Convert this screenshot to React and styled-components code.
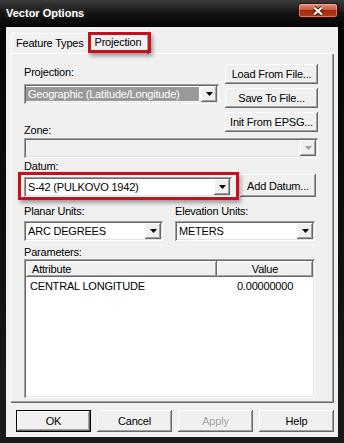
import React from "react";
import styled, { createGlobalStyle } from "styled-components";

/**
 * styles
 */
const GlobalStyle = createGlobalStyle`
  html, body { margin: 0; padding: 0; background: #fff; }
  body {
    font-family: "Liberation Sans", Arial, sans-serif;
    font-size: 11px;
    letter-spacing: -0.2px;
    color: #000;
  }
  * { box-sizing: border-box; }
`;

const raised = `
  box-shadow: inset -1px -1px #696969, inset 1px 1px #ffffff,
    inset -2px -2px #a0a0a0, inset 2px 2px #f0f0f0;
`;

const sunken = `
  box-shadow: inset 1px 1px #a0a0a0, inset -1px -1px #ffffff,
    inset 2px 2px #696969, inset -2px -2px #e3e3e3;
`;

const Window = styled.div`
  width: 344px;
  height: 443px;
  display: flex;
  flex-direction: column;
  background: linear-gradient(
    180deg,
    #3c3c3c 0px,
    #141414 13px,
    #050505 27px,
    #1a1a1a 100%
  );
`;

const TitleBar = styled.div`
  height: 27px;
  display: flex;
  justify-content: space-between;
  align-items: flex-start;
  padding: 0 6px;
`;

const Title = styled.div`
  line-height: 27px;
  font-weight: bold;
  font-size: 11px;
  letter-spacing: 0;
  color: #fff;
  text-shadow: 0 0 4px rgba(255, 255, 255, 0.25);
`;

const CloseButton = styled.div`
  width: 40px;
  height: 15px;
  margin-top: 3px;
  border: 1px solid #3a0c04;
  border-radius: 3px;
  display: flex;
  align-items: center;
  justify-content: center;
  background: linear-gradient(
    180deg,
    #e0957f 0%,
    #c75a3c 45%,
    #a5290f 50%,
    #b33a1e 100%
  );
  box-shadow: inset 0 0 0 1px rgba(255, 200, 180, 0.45);
`;

const Client = styled.div`
  flex: 1;
  margin: 0 6px 6px 6px;
  padding: 4px 4px 5px 4px;
  background: #f0f0f0;
  display: flex;
  flex-direction: column;
`;

const TabStrip = styled.div`
  height: 22px;
  display: flex;
  align-items: flex-end;
  padding-left: 1px;
  position: relative;
  z-index: 1;
`;

const Tab = styled.div`
  position: relative;
  height: ${({ $active }) => ($active ? 23 : 20)}px;
  margin: ${({ $active }) => ($active ? "0 -2px -1px -2px" : "0")};
  padding: ${({ $active }) => ($active ? "1px 8px 0 8px" : "1px 5px 0 5px")};
  line-height: ${({ $active }) => ($active ? 20 : 19)}px;
  background: #f0f0f0;
  border-radius: 2px 2px 0 0;
  white-space: nowrap;
  box-shadow: inset 1px 1px #ffffff, inset -1px 0 #696969, inset -2px 0 #a0a0a0;
  z-index: ${({ $active }) => ($active ? 2 : 1)};
`;

const Highlight = styled.div`
  position: absolute;
  border: 3px solid #c4111b;
  box-shadow: 2px 3px 4px rgba(0, 0, 0, 0.35);
  pointer-events: none;
  top: ${({ $t }) => $t}px;
  left: ${({ $l }) => $l}px;
  right: ${({ $r }) => $r}px;
  bottom: ${({ $b }) => $b}px;
`;

const Panel = styled.div`
  flex: 1;
  padding: 11px 14px 0 14px;
  background: #f0f0f0;
  box-shadow: inset 1px 1px #ffffff, inset -1px -1px #696969,
    inset -2px -2px #a0a0a0;
  display: flex;
  flex-direction: column;
`;

const TopRow = styled.div`
  display: flex;
  align-items: flex-start;
  gap: 6px;
`;

const Column = styled.div`
  width: ${({ $w }) => $w}px;
  display: flex;
  flex-direction: column;
  gap: ${({ $gap }) => $gap || 0}px;
`;

const Label = styled.div`
  height: 14px;
  line-height: 14px;
  white-space: nowrap;
  margin-top: ${({ $mt }) => $mt || 0}px;
`;

const Combo = styled.div`
  width: ${({ $w }) => $w}px;
  height: 20px;
  margin-top: ${({ $mt }) => $mt || 0}px;
  padding: 2px;
  display: flex;
  background: ${({ $disabled }) => ($disabled ? "#f0f0f0" : "#fff")};
  ${sunken}
`;

const ComboText = styled.div`
  flex: 1;
  margin: 1px 2px 1px 0;
  padding-left: 2px;
  line-height: 14px;
  white-space: nowrap;
  overflow: hidden;
  background: ${({ $selected }) => ($selected ? "#999999" : "transparent")};
  color: ${({ $selected }) => ($selected ? "#fff" : "#000")};
`;

const DropButton = styled.div`
  width: 16px;
  display: flex;
  align-items: center;
  justify-content: center;
  background: #f0f0f0;
  ${raised}
`;

const Button = styled.div`
  width: ${({ $w }) => $w}px;
  height: ${({ $h }) => $h || 20}px;
  display: flex;
  align-items: center;
  justify-content: center;
  white-space: nowrap;
  background: #f0f0f0;
  color: ${({ $disabled }) => ($disabled ? "#a0a0a0" : "#000")};
  text-shadow: ${({ $disabled }) => ($disabled ? "1px 1px #fff" : "none")};
  ${raised}
  ${({ $default }) =>
    $default &&
    `box-shadow: inset 0 0 0 1px #000, inset -2px -2px #696969, inset 2px 2px #ffffff,
      inset -3px -3px #a0a0a0;`}
`;

const DatumRow = styled.div`
  display: flex;
  align-items: flex-start;
  gap: 8px;
  margin-top: 1px;
`;

const ComboWrap = styled.div`
  position: relative;
  margin-top: 3px;
`;

const UnitsGrid = styled.div`
  display: grid;
  grid-template-columns: 139px 140px;
  column-gap: 12px;
  margin-top: 7px;
`;

const ListBox = styled.div`
  width: 291px;
  height: 139px;
  padding: 2px;
  background: #fff;
  ${sunken}
`;

const ListRow = styled.div`
  display: grid;
  grid-template-columns: 191px 96px;
  height: 16px;
  line-height: 16px;
  margin-top: ${({ $mt }) => $mt || 0}px;
`;

const HeaderCell = styled.div`
  padding-left: ${({ $center }) => ($center ? 0 : 6)}px;
  text-align: ${({ $center }) => ($center ? "center" : "left")};
  background: #f0f0f0;
  ${raised}
`;

const Cell = styled.div`
  padding-left: ${({ $center }) => ($center ? 0 : 4)}px;
  text-align: ${({ $center }) => ($center ? "center" : "left")};
  white-space: nowrap;
`;

const Footer = styled.div`
  display: flex;
  justify-content: flex-end;
  gap: 6px;
  margin-top: 7px;
`;

/**
 * parts
 */
const Arrow = ({ disabled }) => (
  <svg width="7" height="4" viewBox="0 0 7 4">
    <polygon points="0,0 7,0 3.5,4" fill={disabled ? "#a0a0a0" : "#000"} />
  </svg>
);

const Select = ({ width, value, selected, disabled, mt }) => (
  <Combo $w={width} $mt={mt} $disabled={disabled}>
    <ComboText $selected={selected}>{value}</ComboText>
    <DropButton>
      <Arrow disabled={disabled} />
    </DropButton>
  </Combo>
);

const App = () => (
  <>
    <GlobalStyle />
    <Window>
      <TitleBar>
        <Title>Vector Options</Title>
        <CloseButton>
          <svg width="14" height="10" viewBox="0 0 14 10">
            <path d="M3 1.5 L11 8.5 M11 1.5 L3 8.5" stroke="#4a1206" strokeWidth="4" />
            <path d="M3 1.5 L11 8.5 M11 1.5 L3 8.5" stroke="#fff" strokeWidth="2.2" />
          </svg>
        </CloseButton>
      </TitleBar>

      <Client>
        <TabStrip>
          <Tab>Feature Types</Tab>
          <Tab $active>
            Projection
            <Highlight $t={1} $l={1} $r={-2} $b={1} />
          </Tab>
        </TabStrip>

        <Panel>
          <TopRow>
            <Column $w={195}>
              <Label $mt={1}>Projection:</Label>
              <Select
                width={195}
                mt={5}
                selected
                value="Geographic (Latitude/Longitude)"
              />
              <Label $mt={19}>Zone:</Label>
            </Column>
            <Column $w={93} $gap={4}>
              <Button $w={93}>Load From File...</Button>
              <Button $w={93}>Save To File...</Button>
              <Button $w={93}>Init From EPSG...</Button>
            </Column>
          </TopRow>

          <Select width={294} mt={1} disabled value="" />

          <Label $mt={1}>Datum:</Label>
          <DatumRow>
            <ComboWrap>
              <Select width={208} value="S-42 (PULKOVO 1942)" />
              <Highlight $t={-5} $l={-6} $r={-7} $b={-3} />
            </ComboWrap>
            <Button $w={76} $h={23}>
              Add Datum...
            </Button>
          </DatumRow>

          <UnitsGrid>
            <Label>Planar Units:</Label>
            <Label>Elevation Units:</Label>
            <Select width={139} mt={3} value="ARC DEGREES" />
            <Select width={140} mt={3} value="METERS" />
          </UnitsGrid>

          <Label $mt={4}>Parameters:</Label>
          <ListBox>
            <ListRow>
              <HeaderCell>Attribute</HeaderCell>
              <HeaderCell $center>Value</HeaderCell>
            </ListRow>
            <ListRow $mt={1}>
              <Cell>CENTRAL LONGITUDE</Cell>
              <Cell $center>0.00000000</Cell>
            </ListRow>
          </ListBox>
        </Panel>

        <Footer>
          <Button $w={75} $h={22} $default>
            OK
          </Button>
          <Button $w={75} $h={22}>
            Cancel
          </Button>
          <Button $w={75} $h={22} $disabled>
            Apply
          </Button>
          <Button $w={75} $h={22}>
            Help
          </Button>
        </Footer>
      </Client>
    </Window>
  </>
);

export default App;
